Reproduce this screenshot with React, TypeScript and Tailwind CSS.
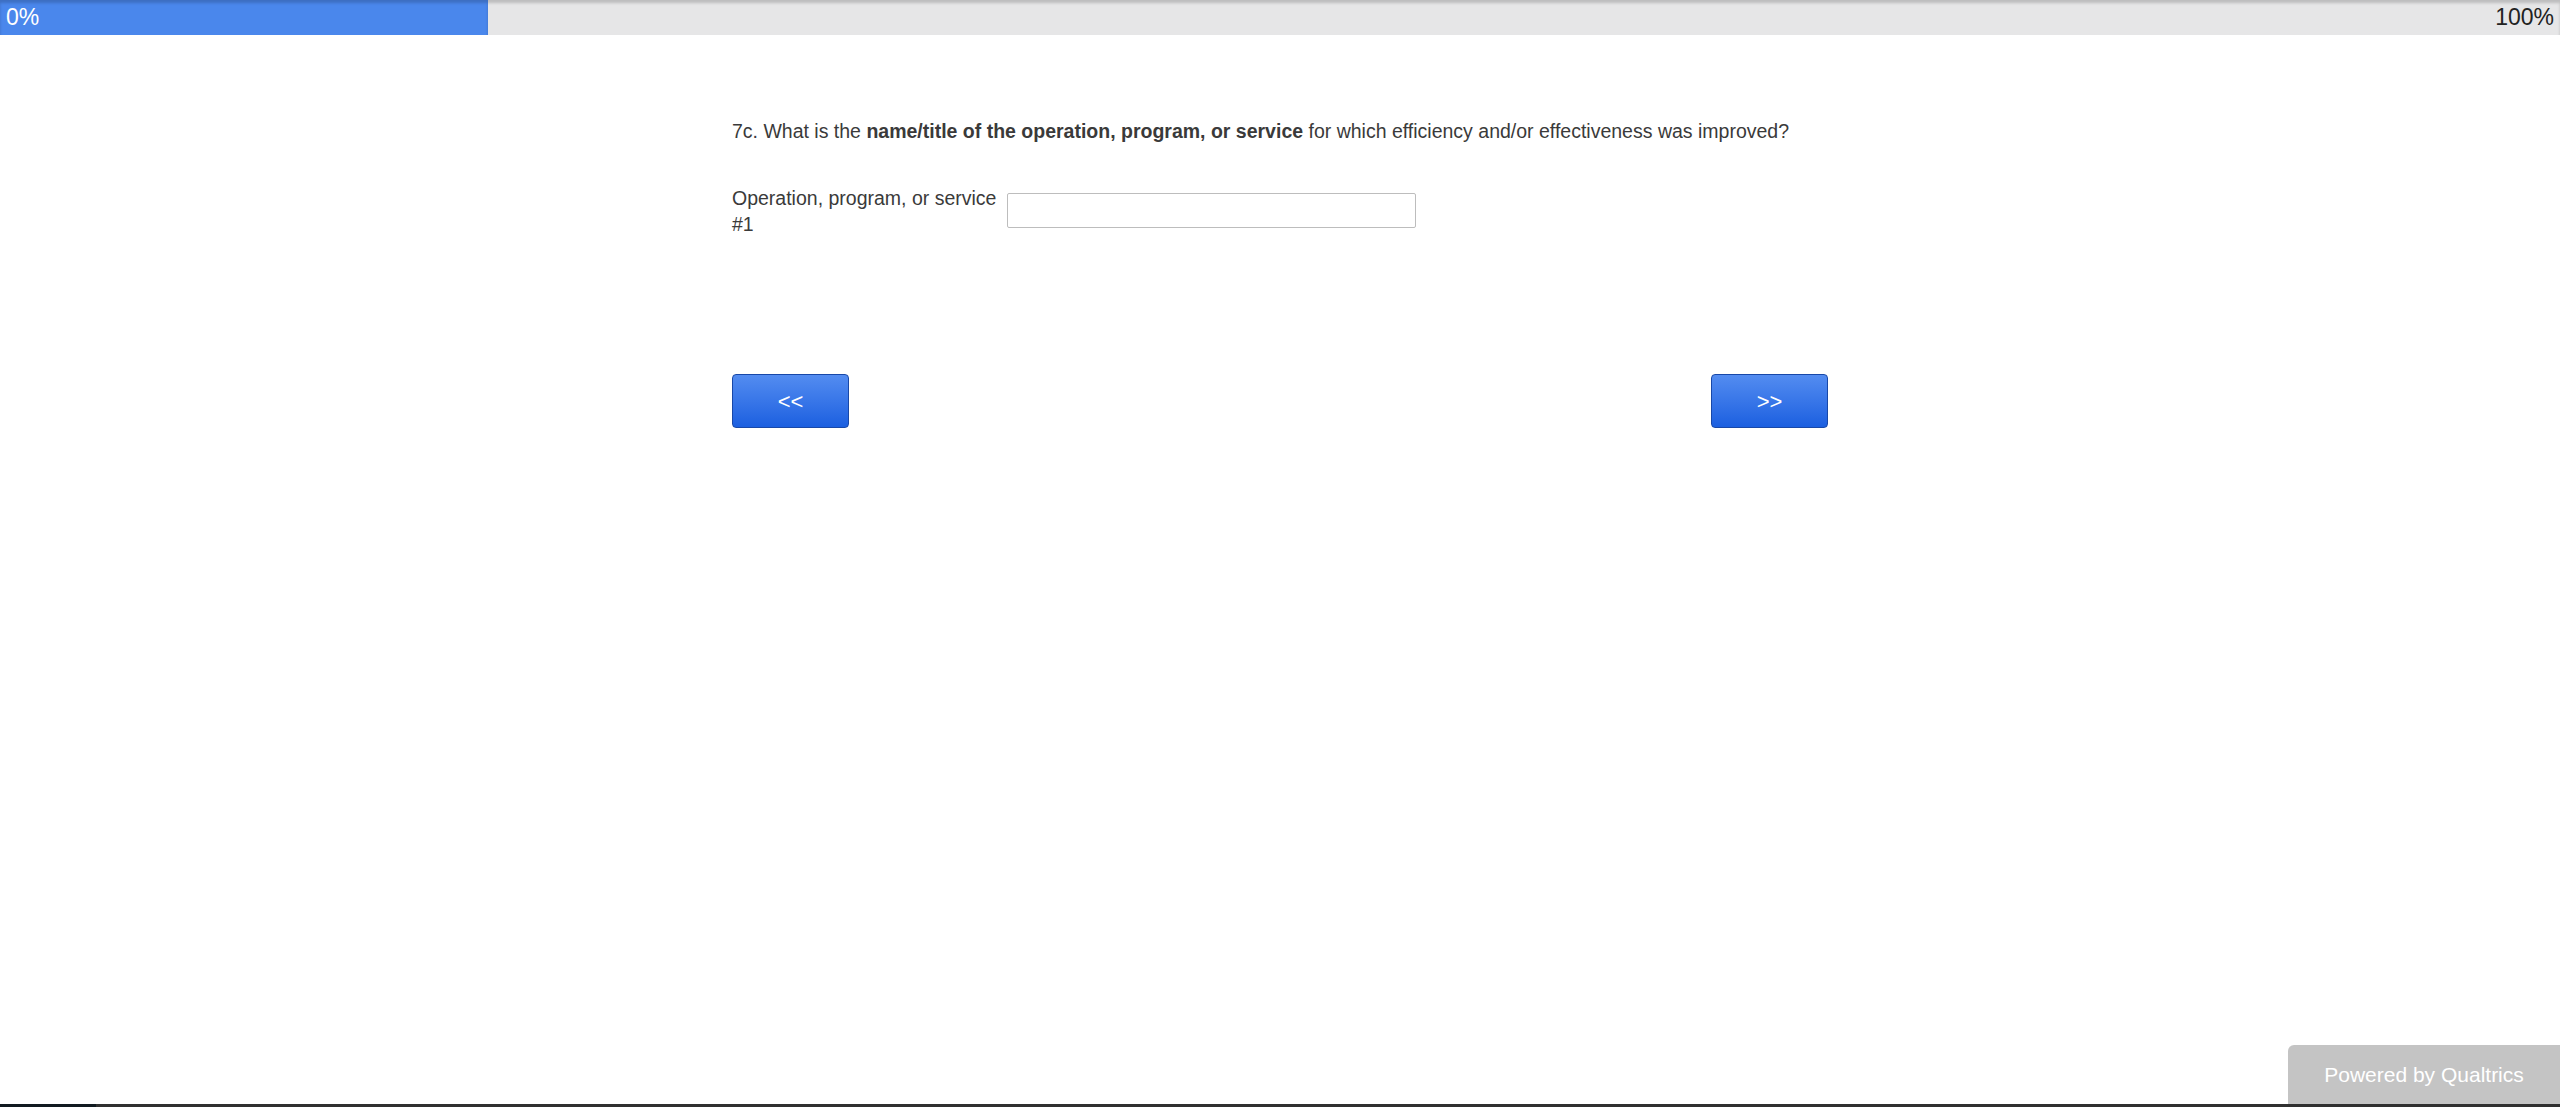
export default function App() {
  return (
    <div className="min-h-screen flex flex-col bg-white font-['Liberation_Sans',Arial,sans-serif] text-[#3a3a3a]">
      {/* progress bar */}
      <div className="relative h-[35px] bg-[#e6e6e7] shadow-[inset_0_3px_3px_rgba(0,0,0,0.18)] flex items-center justify-between">
        <div className="absolute left-0 top-0 h-full w-[488px] bg-[#4a87ec] shadow-[inset_0_3px_3px_rgba(0,0,0,0.18)]" />
        <span className="relative pl-[6px] text-[23px] text-white leading-none">0%</span>
        <span className="relative pr-[6px] text-[23px] text-[#222] leading-none">100%</span>
      </div>

      <main className="mx-auto w-[1096px] pt-[85px]">
        <p className="text-[19.5px] leading-[23px]">
          7c. What is the <b>name/title of the operation, program, or service</b> for which
          efficiency and/or effectiveness was improved?
        </p>

        <div className="mt-[42px] flex items-start">
          <label className="w-[270px] text-[19.5px] leading-[26px]">
            Operation, program, or service #1
          </label>
          <input
            type="text"
            className="ml-[5px] mt-[8px] w-[409px] h-[35px] border border-[#bdbdbd] rounded-[2px] outline-none"
          />
        </div>

        <div className="mt-[137px] flex justify-between">
          <button className="w-[117px] h-[54px] rounded-[4px] border border-[#1848a8] bg-gradient-to-b from-[#538cf0] to-[#1b5fe0] text-white text-[22px]">
            &lt;&lt;
          </button>
          <button className="w-[117px] h-[54px] rounded-[4px] border border-[#1848a8] bg-gradient-to-b from-[#538cf0] to-[#1b5fe0] text-white text-[22px]">
            &gt;&gt;
          </button>
        </div>
      </main>

      <div className="fixed right-0 bottom-[3px] w-[272px] h-[59px] rounded-tl-[6px] bg-[#c4c4c4] flex items-center justify-center text-white text-[21px]">
        Powered by Qualtrics
      </div>
      <div className="fixed left-0 bottom-0 w-full h-[3px] bg-[#303030] flex">
        <div className="w-[96px] h-full bg-[#111a20]" />
      </div>
    </div>
  );
}
